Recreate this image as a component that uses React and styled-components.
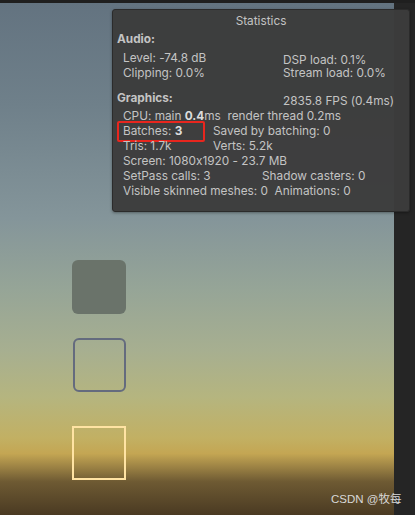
import styled, { createGlobalStyle } from 'styled-components';

const Global = createGlobalStyle`
  html, body { margin: 0; padding: 0; background: #252525; }
  body { width: 415px; height: 515px; overflow: hidden; }
`;

const Screen = styled.div`
  position: relative;
  width: 415px;
  height: 515px;
  display: flex;
  flex-direction: column;
  font-family: Inter, 'Noto Sans', sans-serif;
  font-feature-settings: 'calt' 0;
`;

const TopBar = styled.div`
  height: 3px;
  background: #1f1f1f;
  flex-shrink: 0;
`;

const Body = styled.div`
  flex: 1;
  display: flex;
`;

const GameView = styled.div`
  position: relative;
  width: 394px;
  background: linear-gradient(
    180deg,
    #637380 0%,
    #6f808a 20%,
    #84959a 42%,
    #96a597 56%,
    #a7af90 68%,
    #b5b57f 77%,
    #c2b063 85%,
    #c4a653 88%,
    #9e8445 90.5%,
    #6e5a33 93.5%,
    #4a3a22 100%
  );
  display: flex;
  flex-direction: column;
  padding: 257px 0 0 72px;
  box-sizing: border-box;
`;

const Strip = styled.div`
  flex: 1;
  background: #252525;
`;

const Slot = styled.div`
  width: 54px;
  height: 54px;
  box-sizing: border-box;
  margin-bottom: ${(p) => p.$gap}px;
  ${(p) => p.$variant === 'filled' && `
    background: #6a736a;
    border-radius: 6px;
  `}
  ${(p) => p.$variant === 'outline' && `
    margin-left: 1px;
    width: 53px;
    height: 54px;
    border: 2px solid #646b7e;
    border-radius: 6px;
  `}
  ${(p) => p.$variant === 'selected' && `
    border: 2px solid #ffe3a3;
  `}
`;

const Watermark = styled.div`
  position: absolute;
  left: 331px;
  bottom: 9px;
  font-family: 'Liberation Sans', 'Noto Sans CJK SC', sans-serif;
  font-size: 11.5px;
  color: #d8d8d8;
  white-space: nowrap;
`;

const Panel = styled.div`
  position: absolute;
  left: 112px;
  top: 9px;
  width: 298px;
  height: 203px;
  box-sizing: border-box;
  background: rgba(60, 60, 60, 0.97);
  border: 1px solid #2b2b2b;
  border-radius: 3px;
  box-shadow: 0 1px 3px rgba(0, 0, 0, 0.35);
  color: #c4c4c4;
  font-size: 11.8px;
  padding: 4px 4px 0 4px;
`;

const Title = styled.div`
  text-align: center;
  line-height: 15px;
  margin-bottom: 3px;
`;

const Section = styled.div`
  font-weight: 700;
  line-height: 15px;
`;

const Group = styled.div`
  display: flex;
  padding-left: 6px;
`;

const Col = styled.div`
  width: ${(p) => p.$w}px;
  padding-top: ${(p) => p.$top || 0}px;
  line-height: ${(p) => p.$lh || 15}px;
`;

const Line = styled.div`
  display: grid;
  grid-template-columns: ${(p) => p.$cols || '1fr'};
  line-height: 15px;
  white-space: nowrap;
  padding-left: ${(p) => p.$indent || 0}px;
  margin-top: ${(p) => p.$mt || 0}px;
`;

const Cell = styled.span`
  position: relative;
`;

const Strong = styled.b`
  font-weight: 700;
  color: #dcdcdc;
`;

const Highlight = styled.span`
  position: absolute;
  left: -6px;
  top: -3px;
  width: 88px;
  height: 21px;
  box-sizing: border-box;
  border: 2px solid #e8261e;
  border-radius: 2px;
`;

export default function App() {
  return (
    <Screen>
      <Global />
      <TopBar />
      <Body>
        <GameView>
          <Slot $variant="filled" $gap={24} />
          <Slot $variant="outline" $gap={34} />
          <Slot $variant="selected" $gap={0} />
          <Watermark>CSDN @牧每</Watermark>
        </GameView>
        <Strip />
      </Body>

      <Panel>
        <Title>Statistics</Title>
        <Section>Audio:</Section>
        <Group>
          <Col $w={160} $top={4}>
            <div>Level: -74.8 dB</div>
            <div>Clipping: 0.0%</div>
          </Col>
          <Col $w={120} $top={7} $lh={13}>
            <div>DSP load: 0.1%</div>
            <div>Stream load: 0.0%</div>
          </Col>
        </Group>
        <Line $cols="166px 1fr" $mt={10}>
          <Section>Graphics:</Section>
          <Cell style={{ top: 3 }}>2835.8 FPS (0.4ms)</Cell>
        </Line>
        <Line $indent={6} $mt={3}>
          <Cell>
            CPU: main <Strong>0.4</Strong>ms&nbsp; render thread 0.2ms
          </Cell>
        </Line>
        <Line $indent={6} $cols="90px 1fr">
          <Cell>
            <Highlight />
            Batches: <Strong>3</Strong>
          </Cell>
          <Cell>Saved by batching: 0</Cell>
        </Line>
        <Line $indent={6} $cols="90px 1fr">
          <Cell>Tris: 1.7k</Cell>
          <Cell>Verts: 5.2k</Cell>
        </Line>
        <Line $indent={6}>
          <Cell>Screen: 1080x1920 - 23.7 MB</Cell>
        </Line>
        <Line $indent={6} $cols="139px 1fr">
          <Cell>SetPass calls: 3</Cell>
          <Cell>Shadow casters: 0</Cell>
        </Line>
        <Line $indent={6}>
          <Cell>Visible skinned meshes: 0&nbsp; Animations: 0</Cell>
        </Line>
      </Panel>
    </Screen>
  );
}
